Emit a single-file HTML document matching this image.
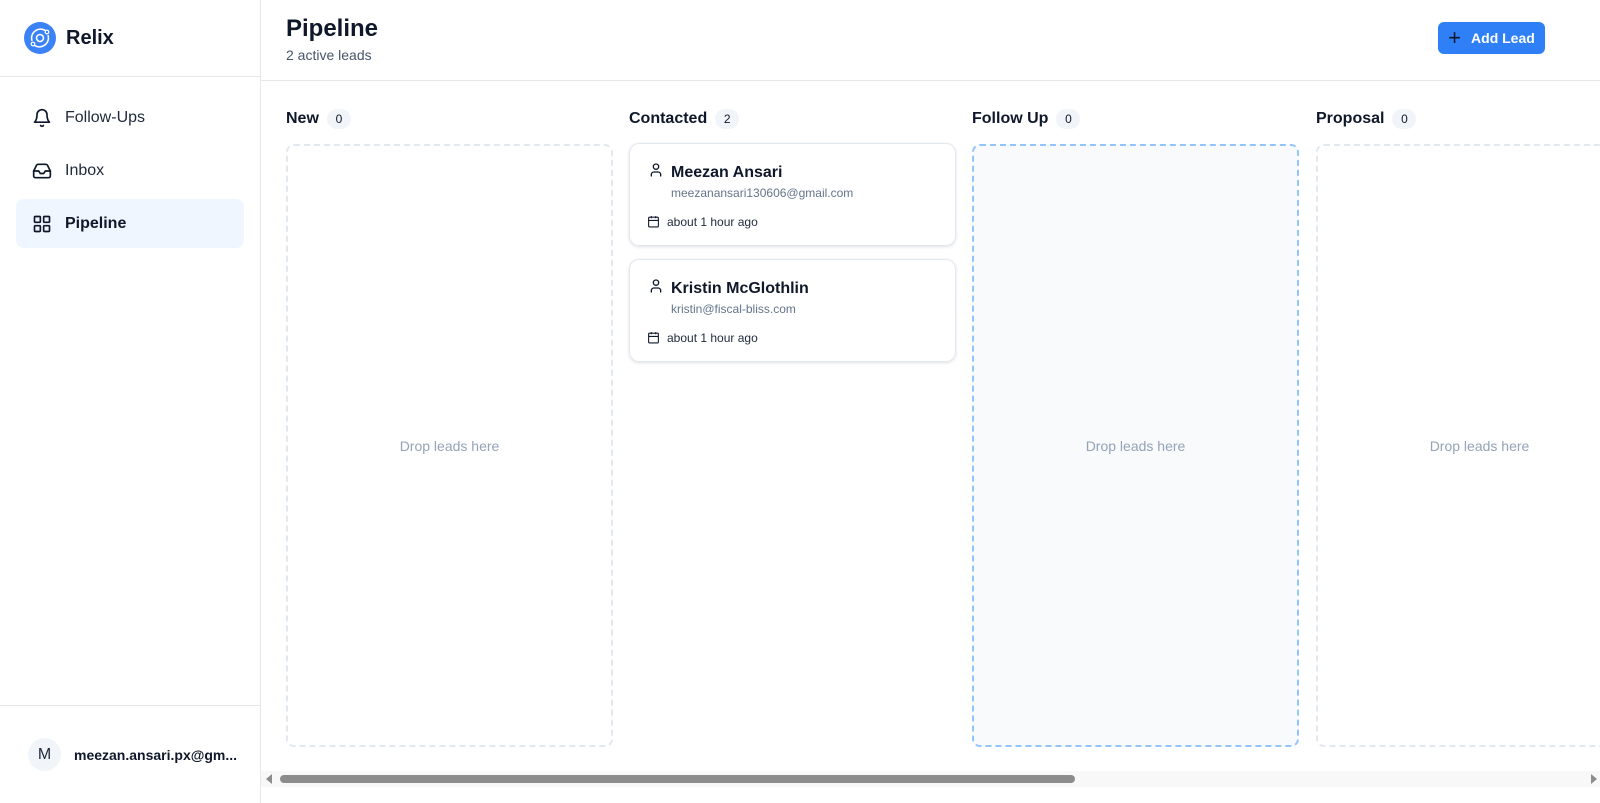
<!DOCTYPE html>
<html><head><meta charset="utf-8"><style>
*{box-sizing:border-box;margin:0;padding:0}
body{width:1600px;height:803px;overflow:hidden;font-family:"Liberation Sans",sans-serif;background:#fff;color:#0f172a;position:relative}
.sb{position:absolute;left:0;top:0;width:261px;height:803px;border-right:1px solid #e5e7eb;background:#fff}
.logo{height:77px;border-bottom:1px solid #e5e7eb;display:flex;align-items:center;padding-left:24px}
.logo span{font-weight:bold;font-size:20px;margin-left:10px}
.nav{padding:16px}
.it{height:49px;border-radius:8px;display:flex;align-items:center;padding-left:16px;font-size:16px;color:#1e293b;margin-bottom:4px}
.it svg{margin-right:13px}
.it.act{background:#eff6ff;font-weight:bold;color:#0f172a}
.usr{position:absolute;left:0;bottom:0;width:260px;height:98px;border-top:1px solid #e5e7eb;display:flex;align-items:center;padding-left:28px}
.av{width:33px;height:33px;border-radius:50%;background:#f1f5f9;display:flex;align-items:center;justify-content:center;font-size:16px;color:#1e293b;margin-right:13px}
.usr b{font-size:14px}
.hd{position:absolute;left:261px;top:0;right:0;height:81px;border-bottom:1px solid #e5e7eb}
.hd h1{position:absolute;left:25px;top:15px;font-size:24px}
.hd p{position:absolute;left:25px;top:47px;font-size:14px;color:#475569}
.btn{position:absolute;right:55px;top:22px;width:107px;height:32px;background:#2f80f7;border-radius:6px;color:#fff;font-weight:bold;font-size:14px;display:flex;align-items:center;justify-content:center}
.btn i{font-style:normal;font-weight:normal;font-size:22px;margin-right:10px;color:#0f172a;line-height:1}
.col{position:absolute;top:108px;width:327px}
.ch{display:flex;align-items:center;height:22px;font-weight:bold;font-size:16px}
.bd{margin-left:8px;width:24px;height:20px;border-radius:10px;background:#f1f5f9;font-size:12px;font-weight:normal;display:flex;align-items:center;justify-content:center}
.box{position:absolute;top:36px;left:0;width:327px;height:603px;border:2px dashed #e2e8f0;border-radius:8px;display:flex;align-items:center;justify-content:center;color:#94a3b8;font-size:14px}
.box.hl{border-color:#93c5fd;background:#f8fafc}
.card{position:absolute;left:0;width:327px;height:103px;border:1px solid #e2e8f0;border-radius:10px;box-shadow:0 1px 3px rgba(0,0,0,.12)}
.card .nm{position:absolute;left:41px;top:20px;font-size:16px;font-weight:bold}
.card .pi{position:absolute;left:18px;top:18px}
.card .em{position:absolute;left:41px;top:42px;font-size:12px;color:#64748b}
.card .ci{position:absolute;left:17px;top:71px}
.card .dt{position:absolute;left:37px;top:71px;font-size:12px;color:#1e293b}
.scr{position:absolute;left:261px;top:771px;right:0;height:16px;background:#f8f8f8}
.thumb{position:absolute;left:19px;top:4px;width:795px;height:8px;border-radius:4px;background:#8c8c8c}
</style></head><body>
<div class="sb">
 <div class="logo"><svg width="32" height="32" viewBox="0 0 32 32"><circle cx="16" cy="16" r="16" fill="#3b82f6"/><path d="M8 19a9 9 0 0 1 14-10M24 13a9 9 0 0 1-14 10" stroke="#fff" stroke-width="1.5" fill="none"/><circle cx="16" cy="16" r="3.5" stroke="#fff" stroke-width="1.6" fill="none"/><circle cx="23" cy="10" r="1.8" stroke="#fff" stroke-width="1.2" fill="#3b82f6"/><circle cx="9" cy="22" r="1.8" stroke="#fff" stroke-width="1.2" fill="#3b82f6"/></svg><span>Relix</span></div>
 <div class="nav">
  <div class="it"><svg width="20" height="20" viewBox="0 0 24 24" fill="none" stroke="#0f172a" stroke-width="2" stroke-linecap="round" stroke-linejoin="round"><path d="M6 8a6 6 0 0 1 12 0c0 7 3 9 3 9H3s3-2 3-9"/><path d="M10.3 21a1.94 1.94 0 0 0 3.4 0"/></svg>Follow-Ups</div>
  <div class="it"><svg width="20" height="20" viewBox="0 0 24 24" fill="none" stroke="#0f172a" stroke-width="2" stroke-linecap="round" stroke-linejoin="round"><path d="M22 12h-6l-2 3h-4l-2-3H2"/><path d="M5.45 5.11 2 12v6a2 2 0 0 0 2 2h16a2 2 0 0 0 2-2v-6l-3.45-6.89A2 2 0 0 0 16.76 4H7.24a2 2 0 0 0-1.79 1.11z"/></svg>Inbox</div>
  <div class="it act"><svg width="20" height="20" viewBox="0 0 24 24" fill="none" stroke="#0f172a" stroke-width="2"><rect x="3" y="3" width="7" height="7" rx="1"/><rect x="14" y="3" width="7" height="7" rx="1"/><rect x="3" y="14" width="7" height="7" rx="1"/><rect x="14" y="14" width="7" height="7" rx="1"/></svg>Pipeline</div>
 </div>
 <div class="usr"><div class="av">M</div><b>meezan.ansari.px@gm...</b></div>
</div>
<div class="hd"><h1>Pipeline</h1><p>2 active leads</p><div class="btn"><i>+</i>Add Lead</div></div>
<div class="col" style="left:286px"><div class="ch">New<span class="bd">0</span></div><div class="box">Drop leads here</div></div>
<div class="col" style="left:629px"><div class="ch">Contacted<span class="bd">2</span></div>
 <div class="card" style="top:35px"><svg class="pi" width="16" height="16" viewBox="0 0 24 24" fill="none" stroke="#0f172a" stroke-width="2" stroke-linecap="round"><circle cx="12" cy="7" r="4"/><path d="M19 21v-2a4 4 0 0 0-4-4H9a4 4 0 0 0-4 4v2"/></svg><div class="nm">Meezan Ansari</div><div class="em">meezanansari130606@gmail.com</div><svg class="ci" width="13" height="13" viewBox="0 0 24 24" fill="none" stroke="#0f172a" stroke-width="2"><rect x="3" y="4" width="18" height="18" rx="2"/><path d="M16 2v4M8 2v4M3 10h18"/></svg><div class="dt">about 1 hour ago</div></div>
 <div class="card" style="top:151px"><svg class="pi" width="16" height="16" viewBox="0 0 24 24" fill="none" stroke="#0f172a" stroke-width="2" stroke-linecap="round"><circle cx="12" cy="7" r="4"/><path d="M19 21v-2a4 4 0 0 0-4-4H9a4 4 0 0 0-4 4v2"/></svg><div class="nm">Kristin McGlothlin</div><div class="em">kristin@fiscal-bliss.com</div><svg class="ci" width="13" height="13" viewBox="0 0 24 24" fill="none" stroke="#0f172a" stroke-width="2"><rect x="3" y="4" width="18" height="18" rx="2"/><path d="M16 2v4M8 2v4M3 10h18"/></svg><div class="dt">about 1 hour ago</div></div>
</div>
<div class="col" style="left:972px"><div class="ch">Follow Up<span class="bd">0</span></div><div class="box hl">Drop leads here</div></div>
<div class="col" style="left:1316px"><div class="ch">Proposal<span class="bd">0</span></div><div class="box">Drop leads here</div></div>
<div class="scr"><svg style="position:absolute;left:4px;top:3px" width="8" height="10"><path d="M7 0v10L1 5z" fill="#8c8c8c"/></svg><div class="thumb"></div><svg style="position:absolute;right:2px;top:3px" width="8" height="10"><path d="M1 0v10l6-5z" fill="#8c8c8c"/></svg></div>
</body></html>
